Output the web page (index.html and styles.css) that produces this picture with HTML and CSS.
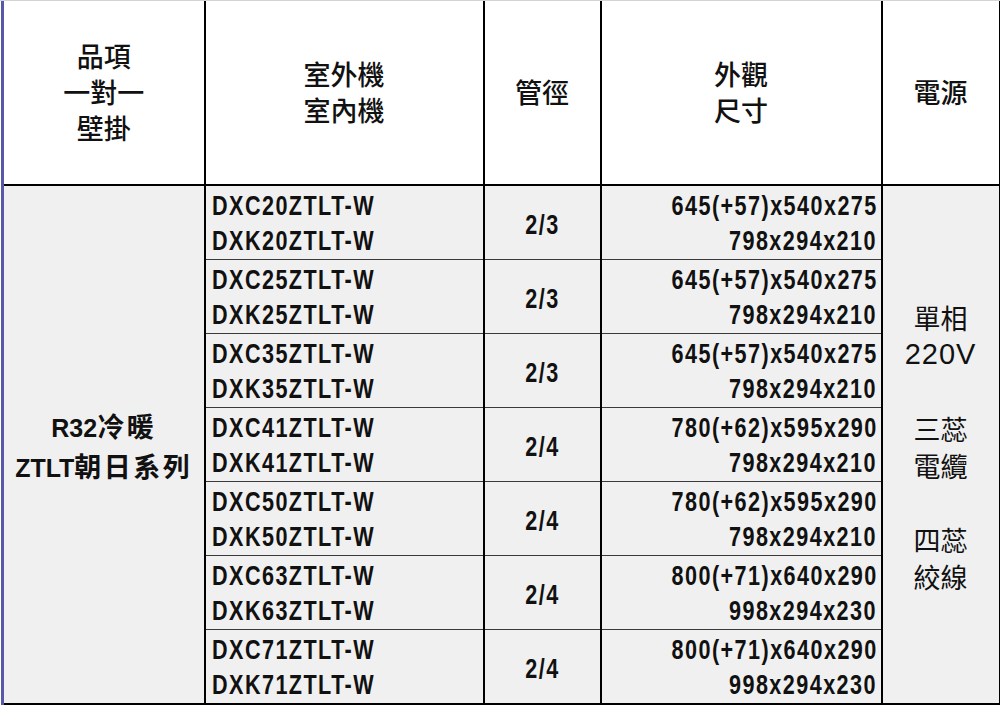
FILE: index.html
```html
<!DOCTYPE html>
<html lang="zh-Hant">
<head>
<meta charset="utf-8">
<link rel="stylesheet" href="styles.css">
</head>
<body>
<div class="sheet">
<table class="spec">
  <colgroup>
    <col class="c1"><col class="c2"><col class="c3"><col class="c4"><col class="c5">
  </colgroup>
  <thead>
    <tr class="head">
      <th class="first"><div>品項</div><div>一對一</div><div>壁掛</div></th>
      <th><div>室外機</div><div>室內機</div></th>
      <th><div>管徑</div></th>
      <th><div>外觀</div><div>尺寸</div></th>
      <th><div>電源</div></th>
    </tr>
  </thead>
  <tbody>
    <tr>
      <td class="series first" rowspan="7"><div>R32<span class="cjk">冷暖</span></div><div>ZTLT<span class="cjk">朝日系列</span></div></td>
      <td class="model"><div class="cell"><div><span>DXC20ZTLT-W</span></div><div><span>DXK20ZTLT-W</span></div></div></td>
      <td class="pipe"><span>2/3</span></td>
      <td class="dim"><div class="cell"><div><span>645(+57)x540x275</span></div><div><span>798x294x210</span></div></div></td>
      <td class="power" rowspan="7"><div>單相</div><div class="v">220V</div><div>&nbsp;</div><div>三蕊</div><div>電纜</div><div>&nbsp;</div><div>四蕊</div><div>絞線</div></td>
    </tr>
    <tr>
      <td class="model"><div class="cell"><div><span>DXC25ZTLT-W</span></div><div><span>DXK25ZTLT-W</span></div></div></td>
      <td class="pipe"><span>2/3</span></td>
      <td class="dim"><div class="cell"><div><span>645(+57)x540x275</span></div><div><span>798x294x210</span></div></div></td>
    </tr>
    <tr>
      <td class="model"><div class="cell"><div><span>DXC35ZTLT-W</span></div><div><span>DXK35ZTLT-W</span></div></div></td>
      <td class="pipe"><span>2/3</span></td>
      <td class="dim"><div class="cell"><div><span>645(+57)x540x275</span></div><div><span>798x294x210</span></div></div></td>
    </tr>
    <tr>
      <td class="model"><div class="cell"><div><span>DXC41ZTLT-W</span></div><div><span>DXK41ZTLT-W</span></div></div></td>
      <td class="pipe"><span>2/4</span></td>
      <td class="dim"><div class="cell"><div><span>780(+62)x595x290</span></div><div><span>798x294x210</span></div></div></td>
    </tr>
    <tr>
      <td class="model"><div class="cell"><div><span>DXC50ZTLT-W</span></div><div><span>DXK50ZTLT-W</span></div></div></td>
      <td class="pipe"><span>2/4</span></td>
      <td class="dim"><div class="cell"><div><span>780(+62)x595x290</span></div><div><span>798x294x210</span></div></div></td>
    </tr>
    <tr>
      <td class="model"><div class="cell"><div><span>DXC63ZTLT-W</span></div><div><span>DXK63ZTLT-W</span></div></div></td>
      <td class="pipe"><span>2/4</span></td>
      <td class="dim"><div class="cell"><div><span>800(+71)x640x290</span></div><div><span>998x294x230</span></div></div></td>
    </tr>
    <tr class="last">
      <td class="model"><div class="cell"><div><span>DXC71ZTLT-W</span></div><div><span>DXK71ZTLT-W</span></div></div></td>
      <td class="pipe"><span>2/4</span></td>
      <td class="dim"><div class="cell"><div><span>800(+71)x640x290</span></div><div><span>998x294x230</span></div></div></td>
    </tr>
  </tbody>
</table>
</div>
</body>
</html>
```
FILE: styles.css
```css
html, body {
  margin: 0;
  padding: 0;
  background: #ffffff;
}
.sheet {
  width: 1000px;
  height: 707px;
  overflow: hidden;
  border-top: 1px solid #d4d4d4;
  box-sizing: border-box;
  padding-left: 1px;
}
.spec {
  border-collapse: collapse;
  table-layout: fixed;
  width: 997px;
  color: #111;
  font-family: "Liberation Sans", "Noto Sans CJK TC", sans-serif;
}
.c1 { width: 202px; }
.c2 { width: 279px; }
.c3 { width: 117px; }
.c4 { width: 281px; }
.c5 { width: 118px; }

.spec th, .spec td {
  border-left: 2px solid #000;
  border-right: 2px solid #000;
  padding: 0;
}
.spec th.first, .spec td.first {
  border-left: 3px solid #5858a8;
}
.spec .head th {
  height: 184px;
  background: #fff;
  font-family: "Noto Sans CJK TC", sans-serif;
  font-weight: 500;
  font-size: 27px;
  line-height: 36px;
  border-bottom: 2px solid #000;
  vertical-align: middle;
  padding-bottom: 1px;
  box-sizing: border-box;
}
.spec tbody td {
  background: #f0f0f0;
  border-bottom: 1px solid #3a3a3a;
  vertical-align: middle;
}
.spec tbody tr.last td { border-bottom: 2px solid #000; }
.spec tbody td.series, .spec tbody td.power { border-bottom: 2px solid #000; }

.cell {
  height: 73px;
  box-sizing: border-box;
  padding-top: 3px;
}
.spec td.model, .spec td.dim, .spec td.pipe {
  font-weight: 700;
  font-size: 27px;
  line-height: 35px;
}
.model span, .dim span, .pipe span {
  display: inline-block;
  letter-spacing: 1.8px;
  transform: scaleX(0.8);
}
.spec td.model { padding-left: 6px; text-align: left; }
.model span { transform-origin: left center; }
.spec td.dim { padding-right: 5px; text-align: right; }
.dim span { transform-origin: right center; margin-right: -1.8px; }
.spec td.pipe { text-align: center; padding-top: 5px; }
.pipe span { transform-origin: center center; }

.spec td.series {
  text-align: center;
  font-weight: 700;
  font-size: 25px;
  line-height: 37px;
  padding-top: 4px;
}
.series .cjk {
  font-family: "Noto Sans CJK TC", sans-serif;
  font-size: 27px;
  letter-spacing: 2.5px;
}
.spec td.power {
  text-align: center;
  font-family: "Noto Sans CJK TC", sans-serif;
  font-size: 27px;
  line-height: 37px;
  padding-top: 4px;
}
.power .v {
  font-family: "Liberation Sans", sans-serif;
  font-size: 29px;
  letter-spacing: 1px;
}
```
